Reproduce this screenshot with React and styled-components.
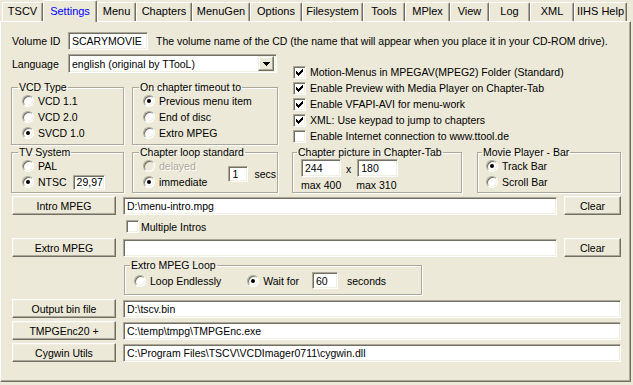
import React from "react";
import styled, { createGlobalStyle } from "styled-components";

const Global = createGlobalStyle`
  html, body {
    margin: 0;
    padding: 0;
    background: #ece9d8;
  }
  body {
    font-family: "Liberation Sans", Arial, sans-serif;
    font-size: 10.5px;
    color: #000;
  }
`;

const Window = styled.div`
  width: 633px;
  height: 385px;
  background: #ece9d8;
  overflow: hidden;
`;

const TabBar = styled.div`
  display: flex;
  align-items: flex-end;
  height: 21px;
  padding-left: 2px;
  position: relative;
  z-index: 1;
`;

const Tab = styled.div`
  box-sizing: border-box;
  width: ${(p) => p.$w}px;
  height: ${(p) => (p.$active ? 22 : 19)}px;
  margin-bottom: ${(p) => (p.$active ? -1 : 0)}px;
  padding-bottom: ${(p) => (p.$active ? 1 : 3)}px;
  border-top: 1px solid #fff;
  border-left: 1px solid #fff;
  border-right: 1px solid #716f64;
  box-shadow: inset -1px 0 #aca899;
  border-radius: 2px 2px 0 0;
  background: #ece9d8;
  font-size: 11px;
  color: ${(p) => (p.$active ? "#0000ff" : "#000")};
  display: flex;
  align-items: center;
  justify-content: center;
  white-space: nowrap;
`;

const Panel = styled.div`
  box-sizing: border-box;
  width: 631px;
  height: 361px;
  border: 1px solid;
  border-color: #fff #716f64 #716f64 #fff;
  box-shadow: inset -1px -1px #aca899;
  padding: 10px 0 0 10px;
  display: flex;
  flex-direction: column;
`;

const Row = styled.div`
  display: flex;
  align-items: center;
  height: ${(p) => p.$h || 19}px;
  margin-top: ${(p) => p.$mt || 0}px;
  margin-left: ${(p) => p.$ml || 0}px;
  gap: ${(p) => p.$gap || 0}px;
`;

const Label = styled.span`
  width: ${(p) => p.$w || 57}px;
  padding-left: 1px;
  box-sizing: border-box;
  white-space: nowrap;
`;

const Desc = styled.span`
  margin-left: 8px;
  white-space: nowrap;
`;

const Field = styled.div`
  box-sizing: border-box;
  width: ${(p) => p.$w}px;
  height: ${(p) => p.$h || 18}px;
  flex: none;
  background: #fff;
  border: 1px solid;
  border-color: #aca899 #fff #fff #aca899;
  box-shadow: inset 1px 1px #716f64, inset -1px -1px #f1efe2;
  padding: 0 3px;
  margin-left: ${(p) => p.$ml || 0}px;
  display: flex;
  align-items: center;
  white-space: nowrap;
  overflow: hidden;
`;

const Combo = styled(Field)`
  padding: 0 2px 0 3px;
  justify-content: space-between;
`;

const ComboButton = styled.div`
  box-sizing: border-box;
  width: 16px;
  height: 15px;
  background: #ece9d8;
  border: 1px solid;
  border-color: #f1efe2 #716f64 #716f64 #f1efe2;
  box-shadow: inset -1px -1px #aca899, inset 1px 1px #fff;
  display: flex;
  align-items: center;
  justify-content: center;
`;

const Upper = styled.div`
  display: grid;
  grid-template-columns: 267px 1fr;
  column-gap: 14px;
  margin-top: 4px;
`;

const Column = styled.div`
  display: flex;
  flex-direction: column;
  padding-top: ${(p) => p.$pt || 0}px;
  padding-left: ${(p) => p.$pl || 0}px;
`;

const GroupRow = styled.div`
  display: flex;
  align-items: stretch;
  margin-top: ${(p) => p.$mt || 0}px;
`;

const Group = styled.fieldset`
  box-sizing: border-box;
  width: ${(p) => p.$w}px;
  margin: 0 ${(p) => p.$mr || 0}px 0 ${(p) => p.$ml || 0}px;
  padding: 0 4px ${(p) => p.$pb || 1}px ${(p) => p.$pl || 10}px;
  border: 1px solid #aca899;
  box-shadow: inset 1px 1px #fff, 1px 1px #fff;
  border-radius: 0;
  min-width: 0;
`;

const Legend = styled.legend`
  margin-left: -4px;
  padding: 0 1px;
  line-height: 11px;
  font-size: 10.5px;
  white-space: nowrap;
`;

const Option = styled.div`
  display: flex;
  align-items: center;
  gap: 4px;
  height: 16px;
  white-space: nowrap;
  color: ${(p) => (p.$disabled ? "#aca899" : "#000")};
  text-shadow: ${(p) => (p.$disabled ? "1px 1px #fff" : "none")};
`;

const Radio = styled.span`
  box-sizing: border-box;
  flex: none;
  width: 12px;
  height: 12px;
  border-radius: 50%;
  background: ${(p) => (p.$disabled ? "#ece9d8" : "#fff")};
  border: 1px solid;
  border-color: #aca899 #fff #fff #aca899;
  box-shadow: inset 1px 1px #716f64, inset -1px -1px #f1efe2;
  position: relative;

  &::after {
    content: "";
    display: ${(p) => (p.$on ? "block" : "none")};
    position: absolute;
    left: 3px;
    top: 3px;
    width: 4px;
    height: 4px;
    border-radius: 50%;
    background: #000;
  }
`;

const Box = styled.span`
  box-sizing: border-box;
  flex: none;
  width: 13px;
  height: 13px;
  background: #fff;
  border: 1px solid;
  border-color: #aca899 #fff #fff #aca899;
  box-shadow: inset 1px 1px #716f64, inset -1px -1px #f1efe2;
  display: flex;
  align-items: center;
  justify-content: center;
`;

const CheckLine = styled(Option)`
  gap: ${(p) => p.$gap || 4}px;
`;

const Button = styled.div`
  box-sizing: border-box;
  flex: none;
  width: ${(p) => p.$w}px;
  height: 19px;
  margin-left: ${(p) => p.$ml || 0}px;
  background: #ece9d8;
  border: 1px solid;
  border-color: #fff #716f64 #716f64 #fff;
  box-shadow: inset -1px -1px #aca899, inset 1px 1px #f1efe2;
  display: flex;
  align-items: center;
  justify-content: center;
  white-space: nowrap;
`;

const Stack = styled.div`
  display: flex;
  flex-direction: column;
`;

const Small = styled.span`
  margin: ${(p) => p.$m || "0"};
  white-space: nowrap;
`;

const LowerGroup = styled(Group)`
  display: flex;
  flex-direction: column;
`;

const PicRow = styled.div`
  display: flex;
  align-items: center;
  margin-top: ${(p) => p.$mt || 0}px;
  height: ${(p) => p.$h || 17}px;
  gap: ${(p) => p.$gap || 0}px;
`;

const Check = () => (
  <svg width="7" height="7" viewBox="0 0 7 7" shapeRendering="crispEdges">
    <path
      d="M0 2h1v3H0zM1 3h1v3H1zM2 4h1v3H2zM3 3h1v3H3zM4 2h1v3H4zM5 1h1v3H5zM6 0h1v3H6z"
      fill="#000"
    />
  </svg>
);

const Arrow = () => (
  <svg width="7" height="4" viewBox="0 0 7 4" shapeRendering="crispEdges">
    <path d="M0 0h7v1H0zM1 1h5v1H1zM2 2h3v1H2zM3 3h1v1H3z" fill="#000" />
  </svg>
);

const RadioOpt = ({ on, disabled, children }) => (
  <Option $disabled={disabled}>
    <Radio $on={on} $disabled={disabled} />
    <span>{children}</span>
  </Option>
);

const CheckOpt = ({ on, gap, children }) => (
  <CheckLine $gap={gap}>
    <Box>{on && <Check />}</Box>
    <span>{children}</span>
  </CheckLine>
);

const tabs = [
  ["TSCV", 41],
  ["Settings", 54],
  ["Menu", 39],
  ["Chapters", 56],
  ["MenuGen", 58],
  ["Options", 52],
  ["Filesystem", 61],
  ["Tools", 42],
  ["MPlex", 45],
  ["View", 39],
  ["Log", 41],
  ["XML", 44],
  ["IIHS Help", 53],
];

const FileRow = ({ label, value, clear, mt }) => (
  <Row $mt={mt} $gap={7}>
    <Button $w={104} $ml={1}>
      {label}
    </Button>
    <Field $w={clear ? 434 : 498}>{value}</Field>
    {clear && <Button $w={57}>Clear</Button>}
  </Row>
);

export default function App() {
  return (
    <Window>
      <Global />
      <TabBar>
        {tabs.map(([name, w]) => (
          <Tab key={name} $w={w} $active={name === "Settings"}>
            {name}
          </Tab>
        ))}
      </TabBar>
      <Panel>
        <Row $h={18}>
          <Label>Volume ID</Label>
          <Field $w={80}>SCARYMOVIE</Field>
          <Desc>
            The volume name of the CD (the name that will appear when you place it in your
            CD-ROM drive).
          </Desc>
        </Row>

        <Upper>
          <Column>
            <Row>
              <Label>Language</Label>
              <Combo $w={209} $h={19}>
                <span>english (original by TTooL)</span>
                <ComboButton>
                  <Arrow />
                </ComboButton>
              </Combo>
            </Row>
            <GroupRow $mt={9}>
              <Group $w={113} $mr={8} $pb={3}>
                <Legend>VCD Type</Legend>
                <RadioOpt>VCD 1.1</RadioOpt>
                <RadioOpt>VCD 2.0</RadioOpt>
                <RadioOpt on>SVCD 1.0</RadioOpt>
              </Group>
              <Group $w={146} $pb={3}>
                <Legend>On chapter timeout to</Legend>
                <RadioOpt on>Previous menu item</RadioOpt>
                <RadioOpt>End of disc</RadioOpt>
                <RadioOpt>Extro MPEG</RadioOpt>
              </Group>
            </GroupRow>
          </Column>
          <Column $pt={10} $pl={1}>
            <CheckOpt on>Motion-Menus in MPEGAV(MPEG2) Folder (Standard)</CheckOpt>
            <CheckOpt on>Enable Preview with Media Player on Chapter-Tab</CheckOpt>
            <CheckOpt on>Enable VFAPI-AVI for menu-work</CheckOpt>
            <CheckOpt on>XML: Use keypad to jump to chapters</CheckOpt>
            <CheckOpt>Enable Internet connection to www.ttool.de</CheckOpt>
          </Column>
        </Upper>

        <GroupRow $mt={2}>
          <Group $w={113} $mr={8}>
            <Legend>TV System</Legend>
            <RadioOpt>PAL</RadioOpt>
            <Option>
              <Radio $on />
              <span>NTSC</span>
              <Field $w={32} $h={15} $ml={2}>
                29,97
              </Field>
            </Option>
          </Group>
          <LowerGroup $w={146} $mr={14}>
            <Legend>Chapter loop standard</Legend>
            <PicRow $h={32}>
              <Stack>
                <RadioOpt disabled>delayed</RadioOpt>
                <RadioOpt on>immediate</RadioOpt>
              </Stack>
              <Field $w={20} $h={16} $ml={21}>
                1
              </Field>
              <Small $m="0 0 0 6px">secs</Small>
            </PicRow>
          </LowerGroup>
          <LowerGroup $w={170} $mr={15} $pl={8}>
            <Legend>Chapter picture in Chapter-Tab</Legend>
            <PicRow $mt={1}>
              <Field $w={40}>244</Field>
              <Small $m="2px 6px 0 5px">x</Small>
              <Field $w={41}>180</Field>
            </PicRow>
            <PicRow $mt={2} $h={13}>
              <Small>max 400</Small>
              <Small $m="0 0 0 15px">max 310</Small>
            </PicRow>
          </LowerGroup>
          <Group $w={144} $pl={8}>
            <Legend>Movie Player - Bar</Legend>
            <RadioOpt on>Track Bar</RadioOpt>
            <RadioOpt>Scroll Bar</RadioOpt>
          </Group>
        </GroupRow>

        <FileRow mt={3} label="Intro MPEG" value="D:\menu-intro.mpg" clear />
        <Row $h={17} $mt={3} $ml={115}>
          <CheckOpt gap={2}>Multiple Intros</CheckOpt>
        </Row>
        <FileRow mt={3} label="Extro MPEG" value="" clear />
        <Row $h="auto" $mt={3} $ml={113}>
          <Group $w={298} $pl={9} $pb={4}>
            <Legend>Extro MPEG Loop</Legend>
            <PicRow $h={19} $gap={26}>
              <RadioOpt>Loop Endlessly</RadioOpt>
              <PicRow $h={19}>
                <RadioOpt on>Wait for</RadioOpt>
                <Field $w={26} $h={17} $ml={13}>
                  60
                </Field>
                <Small $m="0 0 0 9px">seconds</Small>
              </PicRow>
            </PicRow>
          </Group>
        </Row>
        <FileRow mt={4} label="Output bin file" value="D:\tscv.bin" />
        <FileRow mt={3} label="TMPGEnc20 +" value="C:\temp\tmpg\TMPGEnc.exe" />
        <FileRow
          mt={3}
          label="Cygwin Utils"
          value="C:\Program Files\TSCV\VCDImager0711\cygwin.dll"
        />
      </Panel>
    </Window>
  );
}
